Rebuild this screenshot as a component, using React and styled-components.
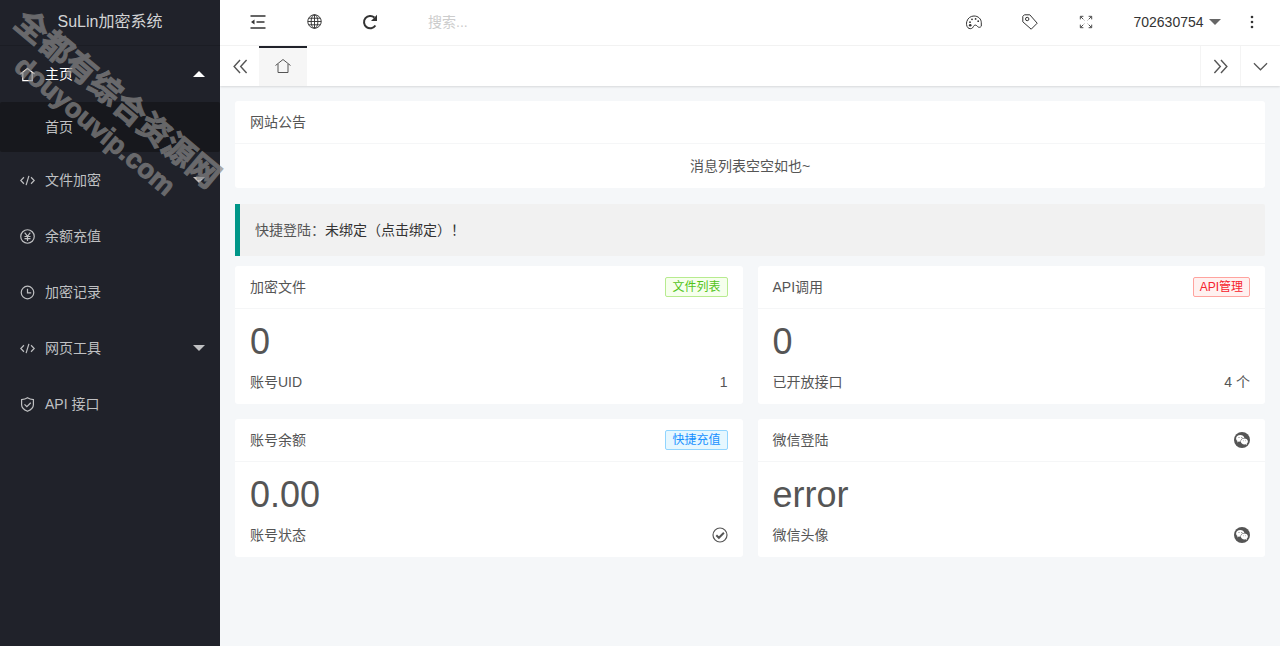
import React from "react";
import styled, { createGlobalStyle } from "styled-components";

const GlobalStyle = createGlobalStyle`
  *, *::before, *::after { box-sizing: border-box; }
  body {
    margin: 0;
    background: #f5f7f9;
    color: #555;
    font: 14px/24px "Liberation Sans", "Noto Sans CJK SC", sans-serif;
  }
  button, input { font: inherit; color: inherit; }
  a { color: inherit; text-decoration: none; }
  ul { list-style: none; margin: 0; padding: 0; }
  h1, h2, p { margin: 0; font-weight: 400; }
`;

const Layout = styled.div`
  display: flex;
  min-height: 100vh;
`;

const Sidebar = styled.aside`
  position: relative;
  flex: 0 0 220px;
  background: #20222a;
  color: #bfc0c2;
`;

const Logo = styled.h1`
  height: 46px;
  line-height: 43px;
  font-size: 16px;
  text-align: center;
  color: #d2d3d4;
  border-bottom: 1px solid #1b1d24;
`;

const NavLink = styled.a`
  display: flex;
  align-items: center;
  gap: 10px;
  height: 56px;
  padding: 0 15px 0 20px;
  color: ${(p) => (p.$open ? "#fff" : "inherit")};
`;

const NavLabel = styled.span`
  flex: 1;
`;

const SubLink = styled.a`
  display: flex;
  align-items: center;
  height: 50px;
  padding-left: 45px;
  border-radius: 2px;
  background: #17181d;
`;

const Caret = styled.span`
  border: 6px solid transparent;
  ${(p) =>
    p.$up
      ? "border-top-width: 0; border-bottom-color: currentColor;"
      : "border-bottom-width: 0; border-top-color: currentColor;"}
`;

const Watermark = styled.div`
  position: absolute;
  z-index: 5;
  left: -24px;
  top: 78px;
  width: 260px;
  color: #888;
  opacity: 0.7;
  font-weight: 700;
  line-height: 35px;
  text-align: center;
  white-space: nowrap;
  pointer-events: none;
  transform: rotate(40deg);
  -webkit-text-stroke: 1px #888;
`;

const WatermarkLine = styled.div`
  font-size: ${(p) => p.$size}px;
`;

const Main = styled.div`
  flex: 1;
  min-width: 0;
`;

const Header = styled.header`
  display: flex;
  align-items: center;
  justify-content: space-between;
  height: 46px;
  padding: 0 16px 2px 10px;
  background: #fff;
  border-bottom: 1px solid #f4f4f4;
  color: #333;
`;

const ToolGroup = styled.div`
  display: flex;
  align-items: center;
`;

const ToolButton = styled.button`
  display: flex;
  align-items: center;
  justify-content: center;
  gap: 5px;
  width: ${(p) => p.$width || "56px"};
  height: 43px;
  padding: 0;
  border: 0;
  background: none;
`;

const UserCaret = styled(Caret)`
  color: #666;
`;

const SearchInput = styled.input`
  width: 180px;
  margin-left: 30px;
  padding: 0;
  border: 0;
  outline: 0;
  background: none;
  &::placeholder { color: #ccc; opacity: 1; }
`;

const TabBar = styled.div`
  display: flex;
  height: 40px;
  background: #fff;
  box-shadow: 0 1px 2px rgba(0, 0, 0, 0.12);
`;

const TabControl = styled.button`
  display: flex;
  align-items: center;
  justify-content: center;
  width: 40px;
  padding: 0;
  border: 0;
  border-left: ${(p) => (p.$divided ? "1px solid #f4f4f4" : "0")};
  background: none;
  color: #555;
`;

const TabList = styled.div`
  display: flex;
  flex: 1;
  margin-left: -1px;
`;

const Tab = styled.button`
  display: flex;
  align-items: center;
  justify-content: center;
  width: 48px;
  padding: 0 0 2px;
  border: 0;
  border-top: 2px solid #20222a;
  background: #f6f6f6;
`;

const Content = styled.main`
  padding: 15px;
`;

const Card = styled.section`
  border-radius: 3px;
  background: #fff;
`;

const CardHeader = styled.div`
  display: flex;
  align-items: center;
  justify-content: space-between;
  height: 43px;
  padding: 0 15px;
  border-bottom: 1px solid #f5f6f7;
`;

const CardTitle = styled.h2`
  font-size: 14px;
`;

const Empty = styled.p`
  padding: 10px 15px;
  text-align: center;
`;

const Quote = styled.p`
  margin: 16px 0 10px;
  padding: 14px 15px;
  border-left: 5px solid #009688;
  border-radius: 0 2px 2px 0;
  background: #f1f1f1;
  a { color: #333; }
`;

const CardGrid = styled.div`
  display: grid;
  grid-template-columns: 1fr 1fr;
  gap: 15px;
`;

const CardBody = styled.div`
  padding: 12px 15px 10px;
`;

const BigValue = styled.p`
  height: 49px;
  font-size: 36px;
  line-height: 42px;
`;

const Detail = styled.div`
  display: flex;
  align-items: center;
  justify-content: space-between;
`;

const tones = {
  green: ["#52c41a", "#f6ffed", "#b7eb8f"],
  red: ["#f5222d", "#fff1f0", "#ffa39e"],
  blue: ["#1890ff", "#e6f7ff", "#91d5ff"],
};

const Tag = styled.a`
  height: 20px;
  padding: 0 6px;
  border: 1px solid ${(p) => tones[p.$tone][2]};
  border-radius: 2px;
  background: ${(p) => tones[p.$tone][1]};
  color: ${(p) => tones[p.$tone][0]};
  font-size: 12px;
  line-height: 18px;
`;

const Svg = styled.svg`
  flex: none;
  display: block;
  fill: none;
  stroke: currentColor;
`;

const shapes = {
  home: <path d="M.5 7.500 8 1.500l7.500 6M3 6v8.500h10V6" />,
  code: <path d="M4.200 4.500.8 8l3.400 3.500M11.800 4.500 15.200 8l-3.400 3.500M9.500 3 6.500 13" />,
  yen: (
    <>
      <circle cx="8" cy="8" r="7.200" />
      <path d="m5 3.800 3 4 3-4M8 7.800v5M4.800 8h6.400M4.800 10.300h6.400" />
    </>
  ),
  clock: (
    <>
      <circle cx="8" cy="8" r="6.700" />
      <path d="M8 4v4.500h4" />
    </>
  ),
  shield: <path d="M8 .8c2 1.400 4 1.800 6.300 1.900v5.500c0 3.300-2.600 5.400-6.300 7-3.700-1.600-6.300-3.700-6.300-7V2.700C4 2.600 6 2.200 8 .8ZM4.800 7.800l2.500 2.500 4.200-4.200" />,
  collapse: (
    <>
      <path d="M.5 2h15M6.500 8h8M.5 14h15" />
      <path d="M1 8l3.500-2.500v5z" fill="currentColor" stroke="none" />
    </>
  ),
  globe: (
    <>
      <circle cx="8" cy="8" r="7.200" />
      <ellipse cx="8" cy="8" rx="3.600" ry="7.200" />
      <path d="M8 .8v14.400M.8 8h14.400M2 4.500h12M2 11.500h12" />
    </>
  ),
  refresh: (
    <>
      <path d="M13.400 11.500A6.200 6.200 0 1 1 12.400 3.500" />
      <path d="M15 .8v6.200H9z" fill="currentColor" stroke="none" />
    </>
  ),
  palette: (
    <>
      <path d="M2 13.800C.3 12 .3 9.500.8 7.500 1.800 4 4.800 2 8 2c4.200 0 7.300 2.900 7.300 6.800v3.400c-1 1.500-3 1.400-3.900.2-.8-1.100-1.900-1.800-3.100-1-1 .7-.8 1.600-1.800 2.500-1.200 1.100-3.300 1-4.500-.1Z" />
      <g fill="currentColor" stroke="none">
        <circle cx="4" cy="8.200" r=".9" />
        <circle cx="6" cy="5.300" r=".9" />
        <circle cx="9.600" cy="4.900" r=".9" />
        <circle cx="12.200" cy="7.200" r=".9" />
        <circle cx="4.200" cy="11.300" r="1.300" />
      </g>
    </>
  ),
  tag: (
    <>
      <path d="M.8 2.400 2.400.8h5.400l7.400 8.400-6 6L.8 7.800Z" />
      <circle cx="5.200" cy="5" r="1.700" />
    </>
  ),
  expand: (
    <>
      <path d="m2 2 4 4M14 2l-4 4M2 14l4-4M14 14l-4-4" strokeDasharray="4 1" />
      <path d="M1.500 5V1.500H5M11 1.500h3.500V5M1.500 11v3.500H5M11 14.500h3.500V11" />
    </>
  ),
  more: (
    <g fill="currentColor" stroke="none">
      <circle cx="8" cy="3" r="1.300" />
      <circle cx="8" cy="8" r="1.300" />
      <circle cx="8" cy="13" r="1.300" />
    </g>
  ),
  left: <path d="M7.500 1 1.200 8l6.300 7M14.500 1 8.200 8l6.300 7" />,
  right: <path d="m1.500 1 6.300 7-6.300 7M8.500 1l6.300 7-6.300 7" />,
  down: <path d="m1 4.500 7 7 7-7" />,
  check: (
    <>
      <circle cx="8" cy="8" r="7" />
      <path d="m4.300 8.200 2.600 2.600 5-5" strokeWidth="2" />
    </>
  ),
  wechat: (
    <>
      <circle cx="8" cy="8" r="8" fill="currentColor" stroke="none" />
      <g fill="#fff" stroke="none">
        <path d="M6.300 3c-2.500 0-4.200 1.500-4.200 3.400 0 1 .5 2 1.400 2.600l-.3 1.400 1.600-.9 1.700.2c-.2-2.300 1.500-3.700 3.900-3.700C10 4.200 8.400 3 6.300 3Z" />
        <path d="M10.400 6.600c-2 0-3.500 1.200-3.500 2.900s1.500 2.900 3.500 2.900l1.200-.2 1.400.8-.3-1.300c.8-.5 1.200-1.300 1.200-2.200 0-1.700-1.600-2.900-3.500-2.900Z" />
      </g>
      <g fill="currentColor" stroke="none">
        <circle cx="5" cy="5.600" r=".5" />
        <circle cx="7.800" cy="5.600" r=".5" />
        <circle cx="9.300" cy="8.800" r=".4" />
        <circle cx="11.600" cy="8.800" r=".4" />
      </g>
    </>
  ),
};

function Icon({ name, size = 16, weight = 1 }) {
  return (
    <Svg viewBox="0 0 16 16" width={size} height={size} strokeWidth={weight} aria-hidden="true">
      {shapes[name]}
    </Svg>
  );
}

const navItems = [
  { icon: "home", label: "主页", open: true, children: ["首页"] },
  { icon: "code", label: "文件加密", expandable: true },
  { icon: "yen", label: "余额充值" },
  { icon: "clock", label: "加密记录" },
  { icon: "code", label: "网页工具", expandable: true },
  { icon: "shield", label: "API 接口" },
];

const stats = [
  { title: "加密文件", action: <Tag href="#" $tone="green">文件列表</Tag>, value: "0", label: "账号UID", detail: "1" },
  { title: "API调用", action: <Tag href="#" $tone="red">API管理</Tag>, value: "0", label: "已开放接口", detail: "4 个" },
  { title: "账号余额", action: <Tag href="#" $tone="blue">快捷充值</Tag>, value: "0.00", label: "账号状态", detail: <Icon name="check" weight={1.2} /> },
  { title: "微信登陆", action: <Icon name="wechat" />, value: "error", label: "微信头像", detail: <Icon name="wechat" /> },
];

export default function App() {
  return (
    <Layout>
      <GlobalStyle />
      <Sidebar>
        <Logo>SuLin加密系统</Logo>
        <nav>
          <ul>
            {navItems.map((item) => (
              <li key={item.label}>
                <NavLink href="#" $open={item.open}>
                  <Icon name={item.icon} size={15} weight={1.3} />
                  <NavLabel>{item.label}</NavLabel>
                  {(item.open || item.expandable) && <Caret $up={item.open} />}
                </NavLink>
                {item.children?.map((child) => (
                  <SubLink href="#" key={child}>{child}</SubLink>
                ))}
              </li>
            ))}
          </ul>
        </nav>
        <Watermark>
          <WatermarkLine $size={32}>全都有综合资源网</WatermarkLine>
          <WatermarkLine $size={27}>douyouvip.com</WatermarkLine>
        </Watermark>
      </Sidebar>
      <Main>
        <Header>
          <ToolGroup>
            <ToolButton aria-label="侧边伸缩"><Icon name="collapse" weight={1.5} /></ToolButton>
            <ToolButton aria-label="前台"><Icon name="globe" size={15} /></ToolButton>
            <ToolButton aria-label="刷新"><Icon name="refresh" weight={2} /></ToolButton>
            <SearchInput type="text" placeholder="搜索..." aria-label="搜索" />
          </ToolGroup>
          <ToolGroup>
            <ToolButton aria-label="主题"><Icon name="palette" /></ToolButton>
            <ToolButton aria-label="便签"><Icon name="tag" /></ToolButton>
            <ToolButton aria-label="全屏"><Icon name="expand" size={14} /></ToolButton>
            <ToolButton $width="126px">702630754<UserCaret /></ToolButton>
            <ToolButton $width="24px" aria-label="更多"><Icon name="more" /></ToolButton>
          </ToolGroup>
        </Header>
        <TabBar>
          <TabControl aria-label="向左"><Icon name="left" size={15} weight={1.5} /></TabControl>
          <TabList>
            <Tab aria-label="主页"><Icon name="home" /></Tab>
          </TabList>
          <TabControl $divided aria-label="向右"><Icon name="right" size={15} weight={1.5} /></TabControl>
          <TabControl $divided aria-label="标签操作"><Icon name="down" size={15} weight={1.3} /></TabControl>
        </TabBar>
        <Content>
          <Card>
            <CardHeader><CardTitle>网站公告</CardTitle></CardHeader>
            <Empty>消息列表空空如也~</Empty>
          </Card>
          <Quote>快捷登陆：<a href="#">未绑定（点击绑定）！</a></Quote>
          <CardGrid>
            {stats.map((stat) => (
              <Card key={stat.title}>
                <CardHeader>
                  <CardTitle>{stat.title}</CardTitle>
                  {stat.action}
                </CardHeader>
                <CardBody>
                  <BigValue>{stat.value}</BigValue>
                  <Detail><span>{stat.label}</span><span>{stat.detail}</span></Detail>
                </CardBody>
              </Card>
            ))}
          </CardGrid>
        </Content>
      </Main>
    </Layout>
  );
}
